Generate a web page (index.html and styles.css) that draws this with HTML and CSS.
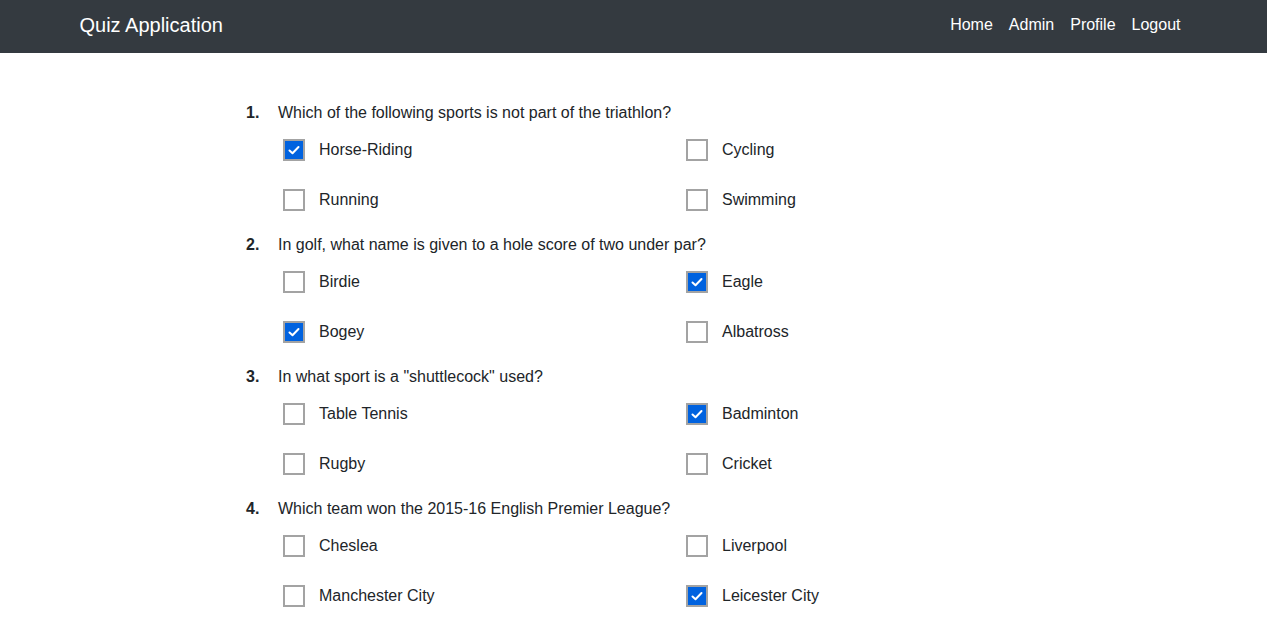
FILE: index.html
```html
<!DOCTYPE html>
<html>
<head>
<meta charset="utf-8">
<link rel="stylesheet" href="styles.css">
</head>
<body>
<nav class="navbar">
  <div class="nav-inner">
    <span class="brand">Quiz Application</span>
    <div class="links">
      <a class="link">Home</a>
      <a class="link">Admin</a>
      <a class="link">Profile</a>
      <a class="link">Logout</a>
    </div>
  </div>
</nav>
<main class="quiz">
  <section class="question">
    <div class="q-title"><span class="num">1.</span><span>Which of the following sports is not part of the triathlon?</span></div>
    <div class="options">
      <label class="opt"><span class="box checked"><svg viewBox="0 0 18 18"><path d="M4.5 9.5 L7.5 12.2 L13.5 6" /></svg></span>Horse-Riding</label>
      <label class="opt"><span class="box"></span>Cycling</label>
      <label class="opt"><span class="box"></span>Running</label>
      <label class="opt"><span class="box"></span>Swimming</label>
    </div>
  </section>
  <section class="question">
    <div class="q-title"><span class="num">2.</span><span>In golf, what name is given to a hole score of two under par?</span></div>
    <div class="options">
      <label class="opt"><span class="box"></span>Birdie</label>
      <label class="opt"><span class="box checked"><svg viewBox="0 0 18 18"><path d="M4.5 9.5 L7.5 12.2 L13.5 6" /></svg></span>Eagle</label>
      <label class="opt"><span class="box checked"><svg viewBox="0 0 18 18"><path d="M4.5 9.5 L7.5 12.2 L13.5 6" /></svg></span>Bogey</label>
      <label class="opt"><span class="box"></span>Albatross</label>
    </div>
  </section>
  <section class="question">
    <div class="q-title"><span class="num">3.</span><span>In what sport is a "shuttlecock" used?</span></div>
    <div class="options">
      <label class="opt"><span class="box"></span>Table Tennis</label>
      <label class="opt"><span class="box checked"><svg viewBox="0 0 18 18"><path d="M4.5 9.5 L7.5 12.2 L13.5 6" /></svg></span>Badminton</label>
      <label class="opt"><span class="box"></span>Rugby</label>
      <label class="opt"><span class="box"></span>Cricket</label>
    </div>
  </section>
  <section class="question">
    <div class="q-title"><span class="num">4.</span><span>Which team won the 2015-16 English Premier League?</span></div>
    <div class="options">
      <label class="opt"><span class="box"></span>Cheslea</label>
      <label class="opt"><span class="box"></span>Liverpool</label>
      <label class="opt"><span class="box"></span>Manchester City</label>
      <label class="opt"><span class="box checked"><svg viewBox="0 0 18 18"><path d="M4.5 9.5 L7.5 12.2 L13.5 6" /></svg></span>Leicester City</label>
    </div>
  </section>
</main>
</body>
</html>
```
FILE: styles.css
```css
* { box-sizing: border-box; }
html, body { margin: 0; padding: 0; }
body {
  font-family: "Liberation Sans", Arial, sans-serif;
  font-size: 16px;
  line-height: 24px;
  color: #212529;
  background: #fff;
}
.navbar {
  background: #343a40;
  height: 53px;
}
.nav-inner {
  width: 1110px;
  margin: 0 auto;
  height: 53px;
  display: flex;
  align-items: center;
  justify-content: space-between;
  padding-left: 1px;
}
.brand {
  color: #fff;
  font-size: 20px;
  line-height: 28px;
  margin-top: -3px;
}
.links {
  display: flex;
  margin-top: -4px;
}
.link {
  color: #fff;
  padding: 0 8px;
  cursor: pointer;
}
.quiz {
  width: 775px;
  margin: 48px auto 0;
}
.question {
  margin-bottom: 8px;
}
.q-title {
  display: flex;
  height: 24px;
}
.num {
  width: 32px;
  font-weight: bold;
}
.options {
  display: grid;
  grid-template-columns: 403px 340px;
  grid-auto-rows: 50px;
  padding-left: 37px;
}
.opt {
  display: flex;
  align-items: center;
}
.box {
  width: 22px;
  height: 22px;
  border: 2px solid #a3a3a3;
  background: #fff;
  margin-right: 14px;
  display: flex;
  align-items: center;
  justify-content: center;
}
.box.checked {
  background: #0062df;
}
.box svg {
  width: 18px;
  height: 18px;
}
.box svg path {
  fill: none;
  stroke: #fff;
  stroke-width: 2;
  stroke-linecap: round;
  stroke-linejoin: round;
}
```
